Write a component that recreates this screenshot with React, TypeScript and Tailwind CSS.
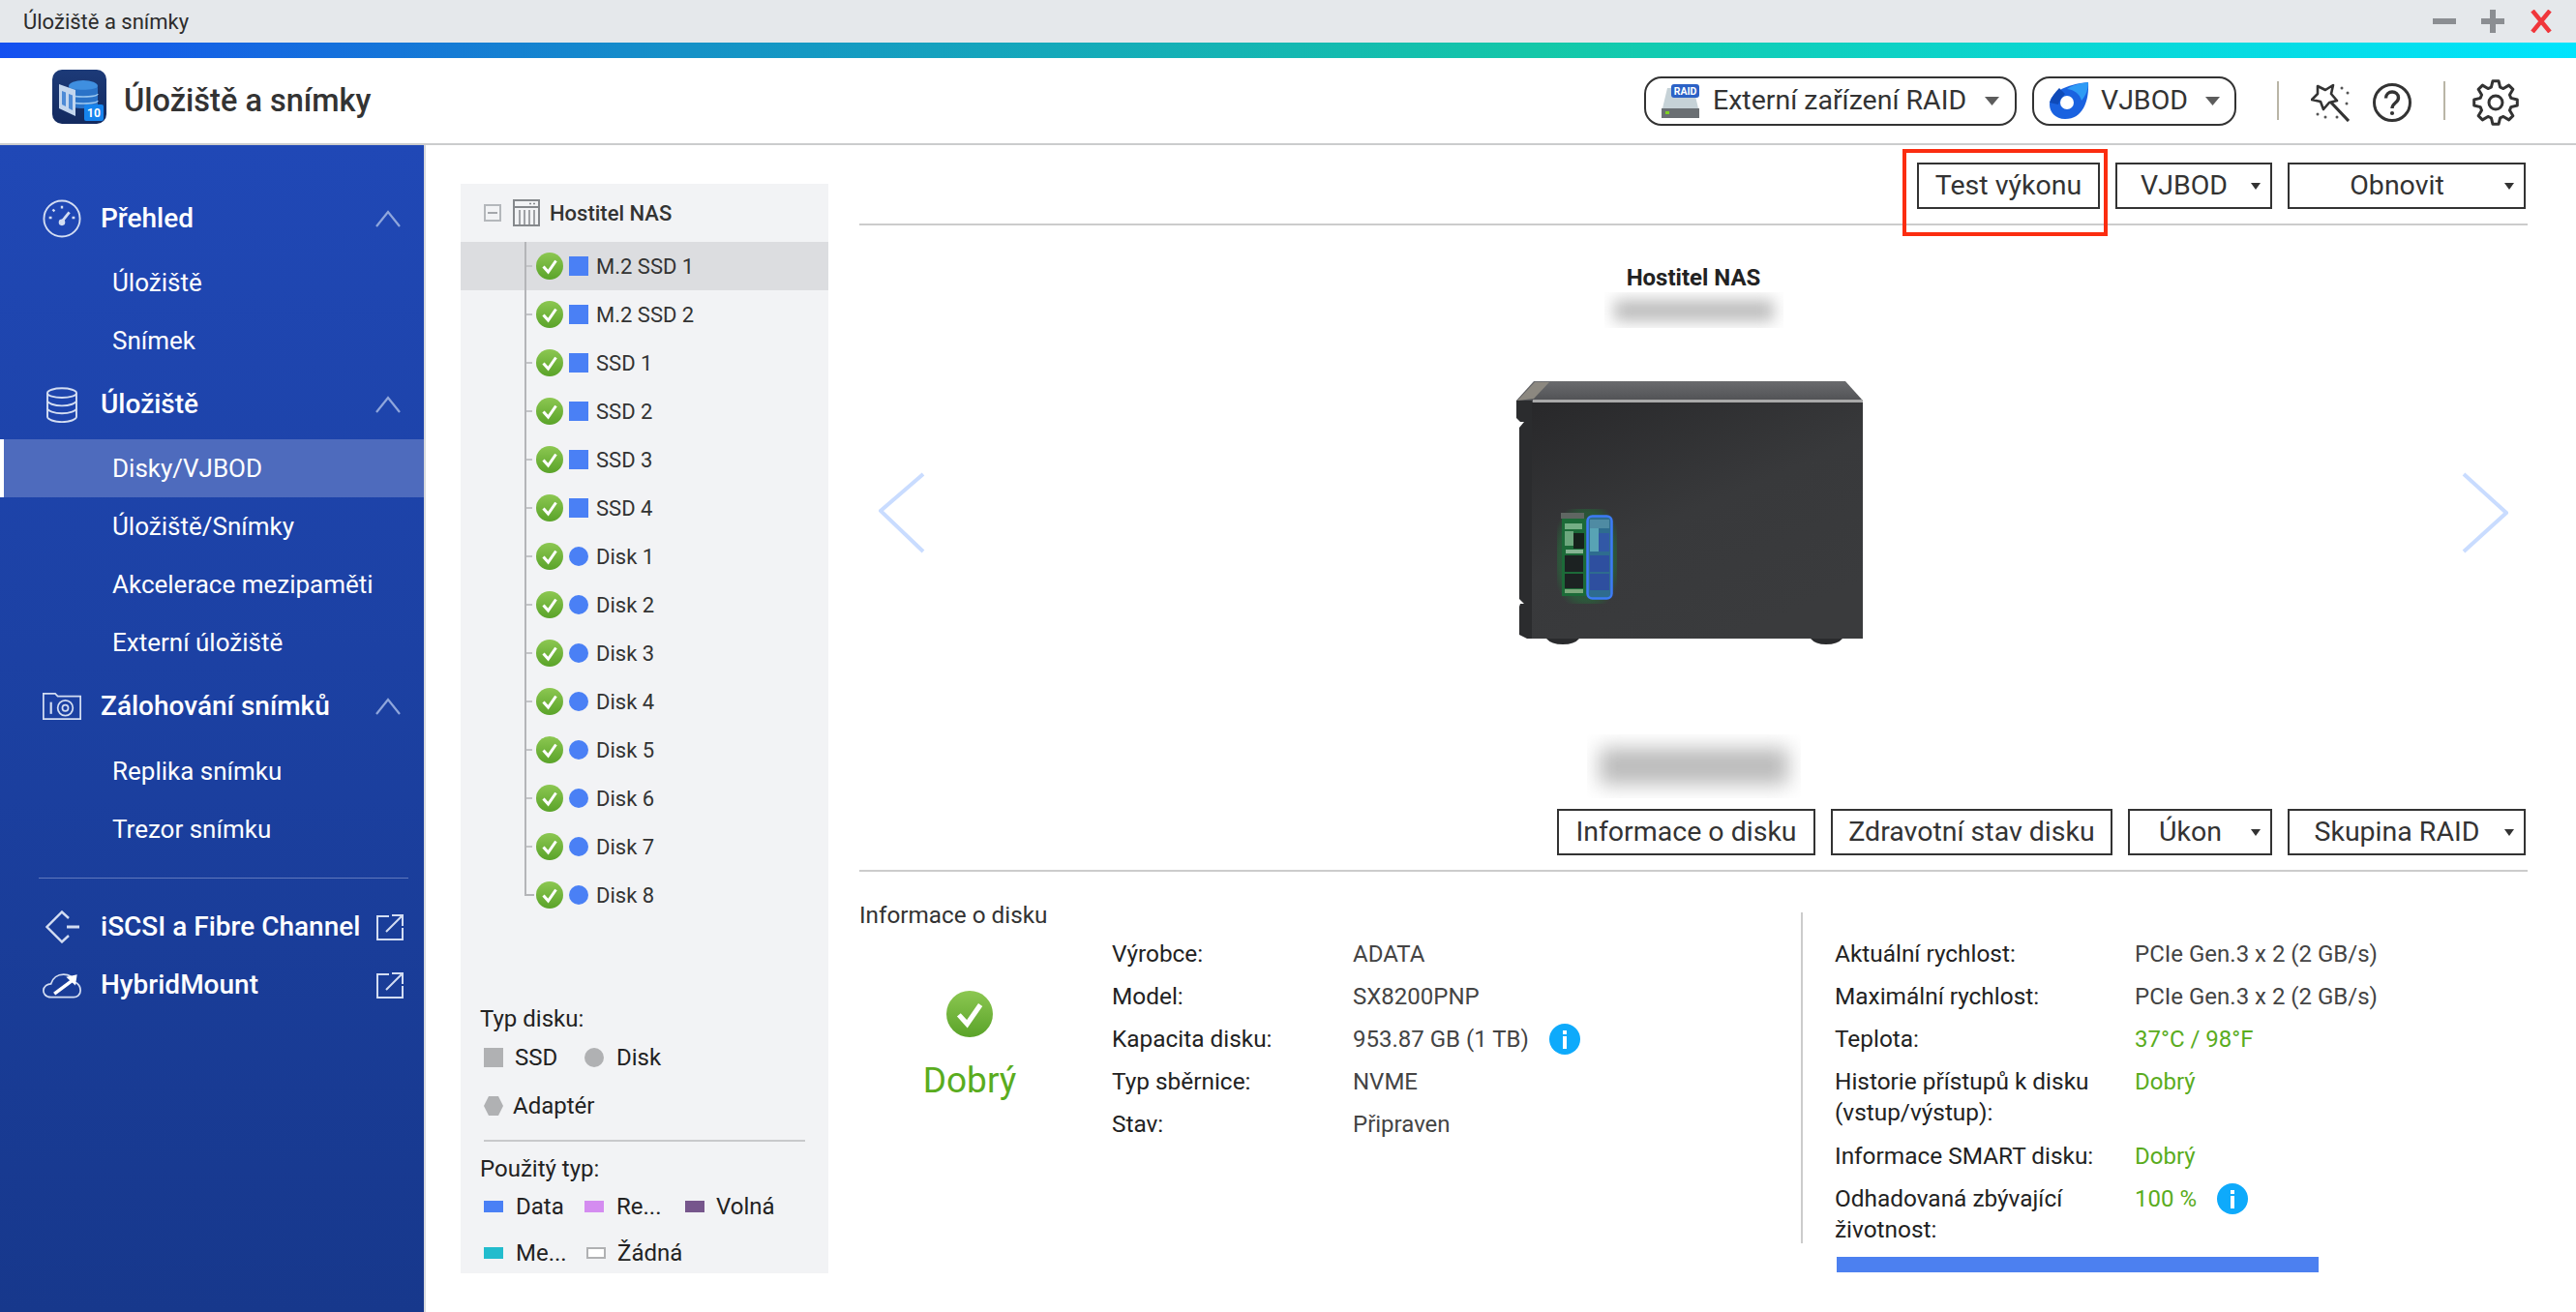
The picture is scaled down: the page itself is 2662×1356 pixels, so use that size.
import React from "react";

const FONT = "font-['Roboto','Noto_Sans',sans-serif]";

function gearPath(cx: number, cy: number, ro: number, ri: number, teeth: number) {
  const pts: string[] = [];
  const step = (Math.PI * 2) / teeth;
  for (let i = 0; i < teeth; i++) {
    const a = i * step - Math.PI / 2;
    const seq: [number, number][] = [
      [ri, a - step * 0.36],
      [ro, a - step * 0.17],
      [ro, a + step * 0.17],
      [ri, a + step * 0.36],
    ];
    for (const [r, t] of seq) pts.push(`${(cx + r * Math.cos(t)).toFixed(2)} ${(cy + r * Math.sin(t)).toFixed(2)}`);
  }
  return "M" + pts.join(" L") + " Z";
}

function Check({ size = 28 }: { size?: number }) {
  return (
    <svg width={size} height={size} viewBox="0 0 28 28" className="shrink-0">
      <defs>
        <linearGradient id="chk" x1="0" y1="0" x2="0" y2="1">
          <stop offset="0" stopColor="#8cc751" />
          <stop offset="1" stopColor="#5aa329" />
        </linearGradient>
      </defs>
      <circle cx="14" cy="14" r="14" fill="url(#chk)" />
      <path d="M7.5 14.5 L12.5 20 L20.5 8.5" fill="none" stroke="#fff" strokeWidth="3" />
    </svg>
  );
}

function Info() {
  return (
    <svg width="32" height="32" viewBox="0 0 32 32" className="shrink-0">
      <circle cx="16" cy="16" r="16" fill="#0eaafb" />
      <rect x="14" y="7" width="4" height="4" fill="#fff" />
      <rect x="14" y="13" width="4" height="13" fill="#fff" />
    </svg>
  );
}

function Chevron() {
  return (
    <svg width="28" height="18" viewBox="0 0 28 18" className="mr-[2px] shrink-0">
      <path d="M2 17 L14 2 L26 17" fill="none" stroke="#8fa6dc" strokeWidth="2.2" />
    </svg>
  );
}

function ExtLink() {
  return (
    <svg width="28" height="27" viewBox="0 0 28 27" className="shrink-0" fill="none" stroke="#d3ddf2" strokeWidth="2">
      <path d="M13 2 H1 V26 H27 V14" />
      <path d="M10 18 L26 2 M16 1 H27 V12" />
    </svg>
  );
}

function SectionIcon({ kind }: { kind: string }) {
  const s = "#d3ddf2";
  if (kind === "gauge")
    return (
      <svg width="40" height="40" viewBox="0 0 42 42" fill="none" stroke={s} strokeWidth="2">
        <circle cx="21" cy="21" r="19.5" />
        <path d="M21 24 L29 14" strokeWidth="3" />
        <circle cx="21" cy="25" r="2.5" fill={s} />
        <path d="M21 7 v3 M11 11 l2 2 M7 20 h3 M32 20 h3" strokeWidth="2.5" />
      </svg>
    );
  if (kind === "db")
    return (
      <svg width="36" height="37" viewBox="0 0 40 42" className="ml-[2px]" fill="none" stroke={s} strokeWidth="2.2">
        <ellipse cx="20" cy="7" rx="17" ry="5.5" />
        <path d="M3 7 V35 C3 38 11 41 20 41 C29 41 37 38 37 35 V7" />
        <path d="M3 16 C3 19 11 22 20 22 C29 22 37 19 37 16" />
        <path d="M3 25 C3 28 11 31 20 31 C29 31 37 28 37 25" />
      </svg>
    );
  if (kind === "cam")
    return (
      <svg width="40" height="32" viewBox="0 0 46 34" fill="none" stroke={s} strokeWidth="2">
        <path d="M1 32 V2 H15 L18 5 H45 V32 Z" />
        <path d="M10 12 V26" strokeWidth="2.5" />
        <circle cx="27" cy="19" r="9" />
        <circle cx="27" cy="19" r="3.5" />
      </svg>
    );
  if (kind === "iscsi")
    return (
      <svg width="36" height="34" viewBox="0 0 36 34" className="ml-[3px]" fill="none" stroke={s} strokeWidth="2.4">
        <path d="M24 8 L17 1.5 L1.5 17 L17 32.5 L24 26" />
        <path d="M22 17 H35" strokeWidth="3" />
      </svg>
    );
  return (
    <svg width="40" height="29" viewBox="0 0 46 32" fill="none" stroke={s} strokeWidth="2">
      <path d="M10 30 C3 30 1 25 1 22 C1 17 6 14 10 14 C12 7 18 3 25 3 C31 3 36 6 38 12 C43 14 45 18 45 22 C45 27 41 30 37 30 Z" />
      <path d="M14 26 L38 8" stroke="#ffffff" strokeWidth="4" />
      <path d="M28 6 L41 3 L39 16 Z" fill="#ffffff" stroke="none" />
    </svg>
  );
}

function SideHead({ icon, label, chev, ext, cls = "" }: { icon: string; label: string; chev?: boolean; ext?: boolean; cls?: string }) {
  return (
    <div className={`flex h-[60px] items-center pl-[44px] pr-[21px] ${cls}`}>
      <span className="flex w-[60px] shrink-0 items-center">
        <SectionIcon kind={icon} />
      </span>
      <span className="flex-1 whitespace-nowrap text-[28px] font-medium text-white">{label}</span>
      {chev && <Chevron />}
      {ext && <ExtLink />}
    </div>
  );
}

function SideItem({ label, active }: { label: string; active?: boolean }) {
  return (
    <div
      className={
        active
          ? "flex h-[60px] items-center border-l-4 border-white bg-[#4e6bbd] pl-[112px] text-[26px] text-white"
          : "flex h-[60px] items-center pl-[116px] text-[26px] text-white"
      }
    >
      {label}
    </div>
  );
}

function Sidebar() {
  return (
    <aside className="flex w-[440px] shrink-0 flex-col border-r-2 border-[#d8dadd] bg-gradient-to-b from-[#2048b6] to-[#17388c] pt-[46px]">
      <SideHead icon="gauge" label="Přehled" chev cls="mb-[6px]" />
      <SideItem label="Úložiště" />
      <SideItem label="Snímek" />
      <SideHead icon="db" label="Úložiště" chev cls="my-[6px]" />
      <SideItem active label="Disky/VJBOD" />
      <SideItem label="Úložiště/Snímky" />
      <SideItem label="Akcelerace mezipaměti" />
      <SideItem label="Externí úložiště" />
      <SideHead icon="cam" label="Zálohování snímků" chev cls="mb-[7px] mt-[6px]" />
      <SideItem label="Replika snímku" />
      <SideItem label="Trezor snímku" />
      <div className="mb-[20px] ml-[40px] mr-[16px] mt-[20px] h-[1px] bg-[#5f78bd]" />
      <SideHead icon="iscsi" label="iSCSI a Fibre Channel" ext />
      <SideHead icon="cloud" label="HybridMount" ext />
    </aside>
  );
}

function TreeRow({ label, round, selected, last }: { label: string; round?: boolean; selected?: boolean; last?: boolean }) {
  return (
    <div className={selected ? "flex h-[50px] items-center bg-[#dcdde0] pl-[66px]" : "flex h-[50px] items-center pl-[66px]"}>
      <span className={last ? "flex h-[50px] w-[12px] shrink-0 flex-col" : "flex h-[50px] w-[12px] shrink-0 flex-col border-l-2 border-[#b4b5b8]"}>
        {last ? (
          <span className="h-[26px] w-[10px] border-b-2 border-l-2 border-[#b4b5b8]" />
        ) : (
          <span className="mt-[24px] h-[2px] w-[6px] bg-[#c4c5c8]" />
        )}
      </span>
      <Check />
      <span className={round ? "ml-[6px] h-[20px] w-[20px] shrink-0 rounded-full bg-[#4a80f5]" : "ml-[6px] h-[20px] w-[20px] shrink-0 bg-[#4a80f5]"} />
      <span className="ml-[8px] mt-[1px] text-[22px] text-[#333]">{label}</span>
    </div>
  );
}

function Tree() {
  const ssd = ["M.2 SSD 1", "M.2 SSD 2", "SSD 1", "SSD 2", "SSD 3", "SSD 4"];
  const disks = ["Disk 1", "Disk 2", "Disk 3", "Disk 4", "Disk 5", "Disk 6", "Disk 7", "Disk 8"];
  return (
    <div className="flex h-[1126px] w-[380px] shrink-0 flex-col overflow-hidden bg-[#f2f3f5]">
      <div className="flex h-[60px] items-center pl-[24px]">
        <span className="flex h-[18px] w-[18px] items-center justify-center border-2 border-[#b4b7bb]">
          <span className="h-[2px] w-[10px] bg-[#a4a7ab]" />
        </span>
        <svg width="28" height="28" viewBox="0 0 28 28" className="ml-[12px]" fill="none" stroke="#85888c" strokeWidth="2">
          <rect x="1" y="1" width="26" height="26" />
          <path d="M1 8 H27" />
          <path d="M7 11 V27 M12 11 V27 M17 11 V27 M22 11 V27" strokeWidth="1.5" />
          <path d="M17 4.5 h2 M21 4.5 h2" strokeWidth="1.5" />
        </svg>
        <span className="ml-[10px] text-[22px] font-medium text-[#333]">Hostitel NAS</span>
      </div>
      {ssd.map((s, i) => (
        <TreeRow key={s} label={s} selected={i === 0} />
      ))}
      {disks.map((s, i) => (
        <TreeRow key={s} label={s} round last={i === disks.length - 1} />
      ))}
      <div className="flex flex-col pl-[20px] pr-[24px] pt-[90px] text-[#222]">
        <div className="text-[24px] leading-[26px]">Typ disku:</div>
        <div className="mt-[14px] flex h-[26px] items-center pl-[4px] text-[24px]">
          <span className="h-[20px] w-[20px] bg-[#b0b1b3]" />
          <span className="ml-[12px] w-[72px]">SSD</span>
          <span className="h-[20px] w-[20px] rounded-full bg-[#b0b1b3]" />
          <span className="ml-[13px]">Disk</span>
        </div>
        <div className="mt-[24px] flex h-[26px] items-center pl-[4px] text-[24px]">
          <svg width="20" height="20" viewBox="0 0 20 20">
            <path d="M5 0 H15 L20 10 L15 20 H5 L0 10 Z" fill="#b0b1b3" />
          </svg>
          <span className="ml-[10px]">Adaptér</span>
        </div>
        <div className="ml-[4px] mt-[22px] h-[2px] w-[332px] bg-[#c8c9cb]" />
        <div className="mt-[15px] text-[24px] leading-[26px]">Použitý typ:</div>
        <div className="mt-[13px] flex h-[26px] items-center pl-[4px] text-[24px]">
          <span className="h-[12px] w-[20px] bg-[#4a80f5]" />
          <span className="ml-[13px] w-[71px]">Data</span>
          <span className="h-[12px] w-[20px] bg-[#d48cf0]" />
          <span className="ml-[13px] w-[71px]">Re...</span>
          <span className="h-[12px] w-[20px] bg-[#76568c]" />
          <span className="ml-[12px]">Volná</span>
        </div>
        <div className="mt-[22px] flex h-[26px] items-center pl-[4px] text-[24px]">
          <span className="h-[12px] w-[20px] bg-[#22bccd]" />
          <span className="ml-[13px] w-[73px]">Me...</span>
          <span className="h-[12px] w-[20px] border-2 border-[#b0b1b3] bg-white" />
          <span className="ml-[12px]">Žádná</span>
        </div>
      </div>
    </div>
  );
}

function Btn({ label, width, caret }: { label: string; width: string; caret?: boolean }) {
  return (
    <div className={`flex h-[48px] shrink-0 items-center border-2 border-[#333] text-[28.5px] text-[#333] ${width}`}>
      <span className="flex-1 text-center">{label}</span>
      {caret && (
        <svg width="10" height="7" viewBox="0 0 10 7" className="mr-[10px] shrink-0">
          <path d="M0 0 H10 L5 7 Z" fill="#333" />
        </svg>
      )}
    </div>
  );
}

function NasPicture() {
  return (
    <svg width="366" height="272" viewBox="0 0 366 272" className="shrink-0">
      <defs>
        <linearGradient id="top" x1="0" y1="0" x2="0" y2="1">
          <stop offset="0" stopColor="#6a6b6e" />
          <stop offset="1" stopColor="#4c4d50" />
        </linearGradient>
        <linearGradient id="side" x1="0" y1="0" x2="0.6" y2="1">
          <stop offset="0" stopColor="#28282a" />
          <stop offset="0.55" stopColor="#38393b" />
          <stop offset="1" stopColor="#3a3b3d" />
        </linearGradient>
        <radialGradient id="glow" cx="0.5" cy="0.5" r="0.6">
          <stop offset="0.78" stopColor="#1f7a3a" stopOpacity="0.45" />
          <stop offset="1" stopColor="#1f7a3a" stopOpacity="0" />
        </radialGradient>
        <filter id="soft"><feGaussianBlur stdDeviation="0.7" /></filter>
      </defs>
      <path d="M0 20 L18 0 L340 0 L358 20 L358 24 L0 24 Z" fill="url(#top)" />
      <path d="M1 20 L19 1 L34 1 L18 18 Z" fill="#8c8880" />
      <rect x="17" y="19" width="341" height="3" fill="#a9a9a9" />
      <path d="M0 20 H16 V266 L11 266 L3 262 V233 L4 230 H8 L3 225 V48 L8 42 H4 L0 38 Z" fill="#2b2c2e" />
      <rect x="16" y="22" width="342" height="244" fill="url(#side)" />
      <path d="M31 266 H65 Q 60 272 48 272 Q 36 272 31 266 Z M304 266 H337 Q 332 272 320 272 Q 309 272 304 266 Z" fill="#2a2b2d" />
      <rect x="42" y="132" width="62" height="98" rx="8" fill="url(#glow)" />
      <g filter="url(#soft)">
        <rect x="47" y="142" width="25" height="80" fill="#1b6a37" />
        <rect x="46" y="136" width="24" height="6" fill="#5f6662" />
        <rect x="50" y="147" width="18" height="6" fill="#9bcca6" opacity="0.7" />
        <rect x="50" y="155" width="9" height="15" fill="#8fc29b" opacity="0.7" />
        <rect x="59" y="157" width="11" height="16" fill="#16201b" />
        <rect x="51" y="174" width="18" height="4" fill="#b4d4ba" opacity="0.7" />
        <rect x="50" y="180" width="19" height="17" fill="#1a2420" />
        <rect x="50" y="199" width="19" height="15" fill="#1a2420" />
        <rect x="50" y="215" width="19" height="4" fill="#a6c49a" opacity="0.7" />
        <rect x="73" y="139" width="25" height="85" rx="5" fill="#2f6c8f" />
        <rect x="76" y="143" width="20" height="9" fill="#4f8ba3" />
        <rect x="76" y="152" width="9" height="24" fill="#63b2bd" opacity="0.8" />
        <rect x="85" y="157" width="11" height="19" fill="#3359a6" />
        <rect x="76" y="180" width="20" height="17" fill="#2e4f9f" />
        <rect x="76" y="199" width="20" height="17" fill="#2e4f9f" />
      </g>
      <rect x="73.5" y="139.5" width="25" height="85" rx="5" fill="none" stroke="#3d7bf6" strokeWidth="2.5" />
    </svg>
  );
}

function Arrow({ right }: { right?: boolean }) {
  return (
    <svg width="48" height="84" viewBox="0 0 48 84" className="shrink-0">
      <path d={right ? "M2 2 L46 42 L2 82" : "M46 2 L2 40 L46 82"} fill="none" stroke="#c9dcff" strokeWidth="4" />
    </svg>
  );
}

function Blur({ w, h, bw, bh, blur }: { w: string; h: string; bw: string; bh: string; blur: string }) {
  return (
    <div className={`flex items-center justify-center overflow-hidden ${w} ${h}`}>
      <div className={`bg-[#bcbcbc] ${blur} ${bw} ${bh}`} />
    </div>
  );
}

function Field({ label, value, tone, info, labelW, mb = "mb-[18px]" }: { label: React.ReactNode; value: string; tone?: boolean; info?: boolean; labelW: string; mb?: string }) {
  return (
    <div className={`flex items-start leading-[26px] ${mb}`}>
      <div className={`shrink-0 text-[24.4px] text-[#222] ${labelW}`}>{label}</div>
      <div className={tone ? "flex items-center text-[24px] text-[#5aac1e]" : "flex items-center text-[24px] text-[#444]"}>
        {value}
        {info && (
          <span className="-my-[3px] ml-[21px]">
            <Info />
          </span>
        )}
      </div>
    </div>
  );
}

function Content() {
  return (
    <div className="flex min-w-0 flex-1 flex-col pl-[32px] pr-[50px]">
      <div className="flex h-[83px] shrink-0 items-end justify-end gap-[16px] border-b-2 border-[#ccc] pb-[15px] pr-[2px]">
        <div className="relative">
          <Btn label="Test výkonu" width="w-[189px]" />
          <div className="pointer-events-none absolute -bottom-[28px] -left-[15px] -right-[8px] -top-[14px] border-4 border-[#fb2d10]" />
        </div>
        <Btn label="VJBOD" width="w-[162px]" caret />
        <Btn label="Obnovit" width="w-[246px]" caret />
      </div>
      <div className="flex h-[668px] shrink-0 flex-col border-b-2 border-[#ccc]">
        <div className="flex-1">
          <div className="flex flex-col items-center">
            <div className="mt-[40px] text-[24px] font-bold leading-[28px] text-[#222]">Hostitel NAS</div>
            <div className="mt-[1px]">
              <Blur w="w-[185px]" h="h-[37px]" bw="w-[165px]" bh="h-[22px]" blur="blur-[8px]" />
            </div>
            <div className="mt-[55px] flex w-full items-center justify-between px-[20px]">
              <Arrow />
              <NasPicture />
              <Arrow right />
            </div>
            <div className="mt-[93px]">
              <Blur w="w-[221px]" h="h-[66px]" bw="w-[195px]" bh="h-[38px]" blur="blur-[10px]" />
            </div>
          </div>
        </div>
        <div className="flex h-[63px] shrink-0 justify-end gap-[16px] pr-[2px]">
          <Btn label="Informace o disku" width="w-[267px]" />
          <Btn label="Zdravotní stav disku" width="w-[291px]" />
          <Btn label="Úkon" width="w-[149px]" caret />
          <Btn label="Skupina RAID" width="w-[246px]" caret />
        </div>
      </div>
      <div className="flex flex-1 pt-[32px]">
        <div className="w-[973px] shrink-0">
          <div className="text-[24.3px] leading-[26px] text-[#333]">Informace o disku</div>
          <div className="flex">
            <div className="flex w-[261px] shrink-0 flex-col items-center pr-[33px] pt-[65px]">
              <Check size={48} />
              <div className="mt-[23px] text-[37px] leading-[44px] text-[#5aac1e]">Dobrý</div>
            </div>
            <div className="pt-[14px]">
              <Field labelW="w-[249px]" label="Výrobce:" value="ADATA" />
              <Field labelW="w-[249px]" label="Model:" value="SX8200PNP" />
              <Field labelW="w-[249px]" label="Kapacita disku:" value="953.87 GB (1 TB)" info />
              <Field labelW="w-[249px]" label="Typ sběrnice:" value="NVME" />
              <Field labelW="w-[249px]" label="Stav:" value="Připraven" />
            </div>
          </div>
        </div>
        <div className="mt-[10px] h-[342px] shrink-0 border-l-2 border-[#ccc] pl-[33px] pt-[30px]">
          <Field labelW="w-[310px]" label="Aktuální rychlost:" value="PCIe Gen.3 x 2 (2 GB/s)" />
          <Field labelW="w-[310px]" label="Maximální rychlost:" value="PCIe Gen.3 x 2 (2 GB/s)" />
          <Field labelW="w-[310px]" label="Teplota:" value="37°C / 98°F" tone />
          <Field
            labelW="w-[310px]"
            label={<span className="-mt-[3px] block leading-[32px]">Historie přístupů k disku<br />(vstup/výstup):</span>}
            value="Dobrý"
            tone
            mb="mb-[16px]"
          />
          <Field labelW="w-[310px]" label="Informace SMART disku:" value="Dobrý" tone />
          <Field
            labelW="w-[310px]"
            label={<span className="-mt-[3px] block leading-[32px]">Odhadovaná zbývající<br />životnost:</span>}
            value="100 %"
            tone
            info
            mb="mb-0"
          />
          <div className="ml-[2px] mt-[12px] h-[16px] w-[498px] bg-[#4c80f0]" />
        </div>
      </div>
    </div>
  );
}

function Pill({ children, width }: { children: React.ReactNode; width: string }) {
  return (
    <div className={`flex h-[51px] shrink-0 items-center rounded-[18px] border-2 border-[#333] bg-white text-[28.5px] text-[#333] ${width}`}>
      {children}
    </div>
  );
}

function PillCaret() {
  return (
    <svg width="15" height="9" viewBox="0 0 15 9" className="shrink-0">
      <path d="M0 0 H15 L7.5 9 Z" fill="#5c5c5c" />
    </svg>
  );
}

function Logo() {
  return (
    <svg width="56" height="56" viewBox="0 0 56 56" className="-mt-[8px] shrink-0">
      <defs>
        <linearGradient id="lg" x1="0" y1="0" x2="0" y2="1">
          <stop offset="0" stopColor="#1c3a78" />
          <stop offset="1" stopColor="#132a5f" />
        </linearGradient>
      </defs>
      <rect width="56" height="56" rx="10" fill="url(#lg)" />
      <ellipse cx="32" cy="17" rx="15" ry="6" fill="#3f8fe0" />
      <path d="M17 17 V37 C17 41 47 41 47 37 V17 C47 22 17 22 17 17 Z" fill="#2b73c8" />
      <path d="M17 25 C17 29 47 29 47 25 M17 32 C17 36 47 36 47 32" stroke="#9cc8f0" strokeWidth="1.4" fill="none" />
      <path d="M7 15 L24 21 V48 L7 40 Z" fill="#c3d6ee" />
      <path d="M10 22 L14 23.5 V38 L10 36 Z M17 25 L21 26.5 V42 L17 40 Z" fill="#4d8ad6" />
      <rect x="33" y="36" width="20" height="17" rx="2" fill="#1684ee" />
      <text x="43" y="49" textAnchor="middle" fontSize="12" fontWeight="700" fill="#fff" fontFamily="Roboto">10</text>
    </svg>
  );
}

export default function App() {
  return (
    <div className={`flex h-[1356px] w-[2662px] flex-col overflow-hidden bg-white ${FONT}`}>
      <div className="flex h-[44px] shrink-0 items-center justify-between bg-[#e5e8eb] px-[24px]">
        <span className="text-[22px] text-[#2c2c2c]">Úložiště a snímky</span>
        <div className="flex items-center gap-[26px]">
          <span className="h-[6px] w-[24px] bg-[#8b8e92]" />
          <svg width="24" height="24" viewBox="0 0 24 24"><path d="M0 9 H9 V0 H15 V9 H24 V15 H15 V24 H9 V15 H0 Z" fill="#8b8e92" /></svg>
          <svg width="24" height="24" viewBox="0 0 24 24"><path d="M3 1 L21 23 M21 1 L3 23" stroke="#f0363b" strokeWidth="4.5" /></svg>
        </div>
      </div>
      <div className="h-[16px] shrink-0 bg-[linear-gradient(90deg,#1450f0_0%,#1590c8_26%,#14c8a8_60%,#00e4fd_100%)]" />
      <div className="flex h-[90px] shrink-0 items-center border-b-2 border-[#cbcccd] pl-[54px] pr-[56px]">
        <Logo />
        <span className="ml-[18px] flex-1 text-[32.5px] font-medium text-[#333]">Úložiště a snímky</span>
        <Pill width="w-[385px]">
          <svg width="39" height="35" viewBox="0 0 39 35" className="ml-[16px] mr-[14px] shrink-0">
            <path d="M6 4 H33 L38 25 H1 Z" fill="#c6d2d7" />
            <rect x="0" y="25" width="39" height="10" fill="#6a6f73" />
            <rect x="4" y="28" width="4" height="3" fill="#7ed321" />
            <rect x="10" y="0" width="29" height="14" rx="3" fill="#2c62c6" />
            <text x="24.5" y="11" textAnchor="middle" fontSize="10.5" fontWeight="700" fill="#fff" fontFamily="Roboto">RAID</text>
          </svg>
          <span className="flex-1 whitespace-nowrap">Externí zařízení RAID</span>
          <span className="mr-[16px]"><PillCaret /></span>
        </Pill>
        <div className="ml-[16px]">
          <Pill width="w-[211px]">
            <svg width="41" height="38" viewBox="0 0 41 38" className="ml-[16px] mr-[12px] shrink-0">
              <path d="M40 0 C41 20 34 38 16 38 C6 38 0 31 0 23 C0 11 17 2 40 0 Z" fill="#1a62e0" />
              <path d="M40 0 C31 1 24 3 18 7 C26 8 31 12 33 19 C38 13 40 7 40 0 Z" fill="#2e9bf5" />
              <path d="M10 6 C6 10 2 15 0 21 L9 23 C10 19 13 15 16 12 Z" fill="#0f4ab8" />
              <circle cx="18" cy="21" r="7" fill="#fff" />
            </svg>
            <span className="flex-1">VJBOD</span>
            <span className="mr-[15px]"><PillCaret /></span>
          </Pill>
        </div>
        <div className="ml-[42px] h-[40px] w-[2px] shrink-0 bg-[#b9b5a6]" />
        <svg width="40" height="40" viewBox="0 0 40 40" className="ml-[33px] mt-[4px] shrink-0" fill="none" stroke="#333" strokeWidth="2.6" strokeLinejoin="round">
          <path d="M7 3 L15 7 L23 2 L21 11 L27 18 L19 20 L13 27 L10 19 L1 17 L7 11 Z" />
          <path d="M21 20 L39 39" strokeWidth="3.2" />
          <g fill="#555" stroke="none">
            <circle cx="32" cy="5" r="1.5" />
            <circle cx="38" cy="10" r="1.5" />
            <circle cx="37" cy="21" r="1.5" />
            <circle cx="7" cy="32" r="1.5" />
            <circle cx="15" cy="35" r="1.5" />
            <circle cx="27" cy="35" r="1.5" />
          </g>
        </svg>
        <svg width="40" height="40" viewBox="0 0 40 40" className="ml-[24px] mt-[4px] shrink-0" fill="none" stroke="#333" strokeWidth="3">
          <circle cx="20" cy="20" r="18.5" />
          <path d="M13.5 15.5 C13.5 7 26.5 7 26.5 15 C26.5 20.5 20 20 20 26" strokeWidth="3.4" />
          <circle cx="20" cy="31" r="2.1" fill="#333" stroke="none" />
        </svg>
        <div className="ml-[33px] h-[40px] w-[2px] shrink-0 bg-[#b9b5a6]" />
        <svg width="54" height="54" viewBox="0 0 54 54" className="ml-[25px] mt-[4px] shrink-0" fill="none" stroke="#333" strokeWidth="3" strokeLinejoin="round">
          <path d={gearPath(27, 27, 22.5, 16.5, 8)} />
          <circle cx="27" cy="27" r="7" />
        </svg>
      </div>
      <div className="flex min-h-0 flex-1">
        <Sidebar />
        <div className="flex min-w-0 flex-1 pl-[36px]">
          <div className="pt-[40px]">
            <Tree />
          </div>
          <Content />
        </div>
      </div>
    </div>
  );
}
